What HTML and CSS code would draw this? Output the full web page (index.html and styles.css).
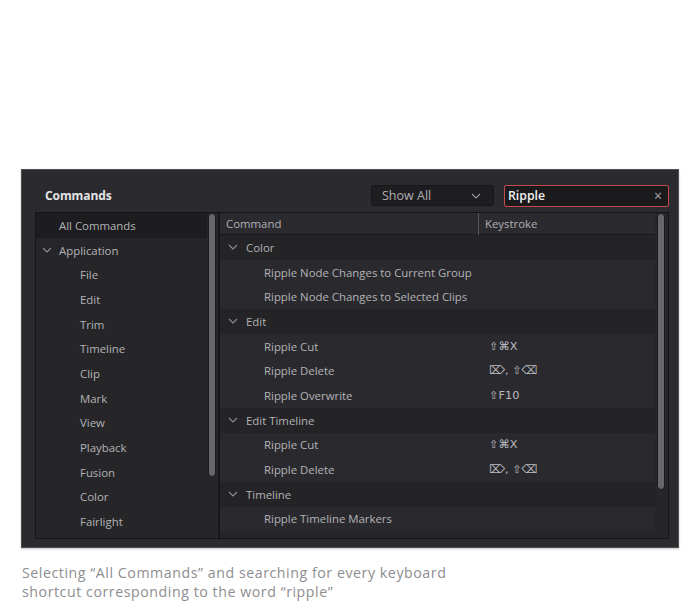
FILE: index.html
```html
<!DOCTYPE html>
<html>
<head>
<meta charset="utf-8">
<link rel="stylesheet" href="styles.css">
</head>
<body>
<div class="page">
  <div class="panel">
    <div class="panel-head">
      <div class="title">Commands</div>
      <div class="dropdown"><span>Show All</span>
        <svg class="chev" width="10" height="6" viewBox="0 0 10 6"><polyline points="1,1 5,5 9,1" fill="none" stroke="#9a9a9e" stroke-width="1.1"/></svg>
      </div>
      <div class="search"><span>Ripple</span><span class="clear">×</span></div>
    </div>
    <div class="content">
      <div class="sidebar">
        <ul class="side-list">
          <li class="side-row selected">All Commands</li>
          <li class="side-row group"><svg class="chev" width="10" height="6" viewBox="0 0 10 6"><polyline points="1,1 5,5 9,1" fill="none" stroke="#8e8e92" stroke-width="1.1"/></svg>Application</li>
          <li class="side-row child">File</li>
          <li class="side-row child">Edit</li>
          <li class="side-row child">Trim</li>
          <li class="side-row child">Timeline</li>
          <li class="side-row child">Clip</li>
          <li class="side-row child">Mark</li>
          <li class="side-row child">View</li>
          <li class="side-row child">Playback</li>
          <li class="side-row child">Fusion</li>
          <li class="side-row child">Color</li>
          <li class="side-row child">Fairlight</li>
        </ul>
        <div class="track side-track"><div class="thumb side-thumb"></div></div>
      </div>
      <div class="main">
        <div class="table">
          <div class="thead">
            <div class="col-cmd">Command</div>
            <div class="col-key">Keystroke</div>
          </div>
          <div class="row grp"><svg class="chev" width="10" height="6" viewBox="0 0 10 6"><polyline points="1,1 5,5 9,1" fill="none" stroke="#8e8e92" stroke-width="1.1"/></svg>Color</div>
          <div class="row item"><div class="cmd">Ripple Node Changes to Current Group</div><div class="key"></div></div>
          <div class="row item"><div class="cmd">Ripple Node Changes to Selected Clips</div><div class="key"></div></div>
          <div class="row grp"><svg class="chev" width="10" height="6" viewBox="0 0 10 6"><polyline points="1,1 5,5 9,1" fill="none" stroke="#8e8e92" stroke-width="1.1"/></svg>Edit</div>
          <div class="row item"><div class="cmd">Ripple Cut</div><div class="key">⇧⌘X</div></div>
          <div class="row item"><div class="cmd">Ripple Delete</div><div class="key">⌦, ⇧⌫</div></div>
          <div class="row item"><div class="cmd">Ripple Overwrite</div><div class="key">⇧F10</div></div>
          <div class="row grp"><svg class="chev" width="10" height="6" viewBox="0 0 10 6"><polyline points="1,1 5,5 9,1" fill="none" stroke="#8e8e92" stroke-width="1.1"/></svg>Edit Timeline</div>
          <div class="row item"><div class="cmd">Ripple Cut</div><div class="key">⇧⌘X</div></div>
          <div class="row item"><div class="cmd">Ripple Delete</div><div class="key">⌦, ⇧⌫</div></div>
          <div class="row grp"><svg class="chev" width="10" height="6" viewBox="0 0 10 6"><polyline points="1,1 5,5 9,1" fill="none" stroke="#8e8e92" stroke-width="1.1"/></svg>Timeline</div>
          <div class="row item"><div class="cmd">Ripple Timeline Markers</div><div class="key"></div></div>
        </div>
        <div class="track main-track"><div class="thumb main-thumb"></div></div>
      </div>
    </div>
  </div>
  <p class="caption">Selecting “All Commands” and searching for every keyboard<br>shortcut corresponding to the word “ripple”</p>
</div>
</body>
</html>
```

FILE: styles.css
```css
* { box-sizing: border-box; }
html, body { margin: 0; padding: 0; background: #ffffff; }
body { width: 700px; height: 610px; overflow: hidden; font-family: "Open Sans", "Liberation Sans", sans-serif; }

.page { padding: 169px 0 0 21px; }

.panel {
  width: 658px;
  height: 379px;
  background: #2b2b2f;
  border: 1px solid #505054;
  box-shadow: 0 1px 2px rgba(0,0,0,0.25);
  padding: 0 9px 8px 13px;
  display: flex;
  flex-direction: column;
}

.panel-head {
  height: 42px;
  display: flex;
  align-items: center;
  padding: 9px 0 0 10px;
}
.title {
  flex: 1;
  color: #e4e4e6;
  font-weight: 700;
  font-size: 12px;
  letter-spacing: -0.1px;
}
.dropdown {
  width: 123px;
  height: 21px;
  background: #1e1e21;
  border: 1px solid #17171a;
  border-radius: 3px;
  display: flex;
  align-items: center;
  justify-content: space-between;
  padding: 0 12px 0 10px;
  color: #aeaeb2;
  font-size: 12.5px;
  margin-right: 10px;
}
.dropdown .chev { margin-top: 1px; }
.search {
  width: 165px;
  height: 22px;
  background: #1b1b1d;
  border: 1.5px solid #c4494a;
  border-radius: 2px;
  display: flex;
  align-items: center;
  justify-content: space-between;
  padding: 0 6px 0 3px;
  color: #f2f2f2;
  font-size: 12.3px;
  font-weight: 600;
}
.search .clear { color: #a6a6aa; font-weight: 400; font-size: 14px; line-height: 1; }

.content {
  flex: 1;
  display: flex;
  border: 1px solid #151517;
  background: #262629;
}

.sidebar {
  width: 184px;
  display: flex;
  border-right: 2px solid #18181b;
}
.side-list {
  list-style: none;
  margin: 0;
  padding: 0;
  flex: 1;
}
.side-row {
  height: 24.7px;
  display: flex;
  align-items: center;
  color: #b3b3b6;
  font-size: 11.4px;
  padding-left: 23px;
  white-space: nowrap;
}
.side-row.selected { background: #1d1d20; padding-top: 1px; }
.side-row.group { padding-left: 6px; }
.side-row.group .chev { margin-right: 7px; }
.side-row.child { padding-left: 44px; }

.track {
  width: 11px;
  padding: 0 1px;
}
.thumb {
  width: 8px;
  background: #66666b;
  border: 1px solid #1b1b1d;
  border-radius: 4px;
}
.side-thumb { height: 264px; }

.main {
  flex: 1;
  display: flex;
}
.table { flex: 1; display: flex; flex-direction: column; }
.thead {
  height: 22px;
  display: flex;
  align-items: center;
  background: #2b2b2f;
  border-bottom: 1px solid #18181b;
  color: #b0b0b4;
  font-size: 11.4px;
}
.col-cmd { width: 258px; padding-left: 6px; }
.col-key {
  flex: 1;
  padding-left: 6px;
  border-left: 1px solid #55555a;
  height: 22px;
  display: flex;
  align-items: center;
}

.row {
  height: 24.7px;
  display: flex;
  align-items: center;
  color: #b3b3b6;
  font-size: 11.4px;
  white-space: nowrap;
}
.row.grp { background: #242427; padding-left: 8px; }
.row.grp .chev { margin-right: 8px; }
.row.item { background: #2a2a2e; }
.row .cmd { width: 259px; padding-left: 44px; }
.row .key { padding-left: 10px; font-family: "DejaVu Sans", sans-serif; font-size: 11.3px; color: #bcbcc0; }

.main-track { width: 13px; padding: 0 2px 0 2px; }
.main-thumb { height: 277px; }

.caption {
  margin: 15px 0 0 1px;
  font-family: "Open Sans", "Liberation Sans", sans-serif;
  font-size: 14.2px;
  line-height: 19px;
  letter-spacing: 0.55px;
  color: #8d8d8f;
}
```
